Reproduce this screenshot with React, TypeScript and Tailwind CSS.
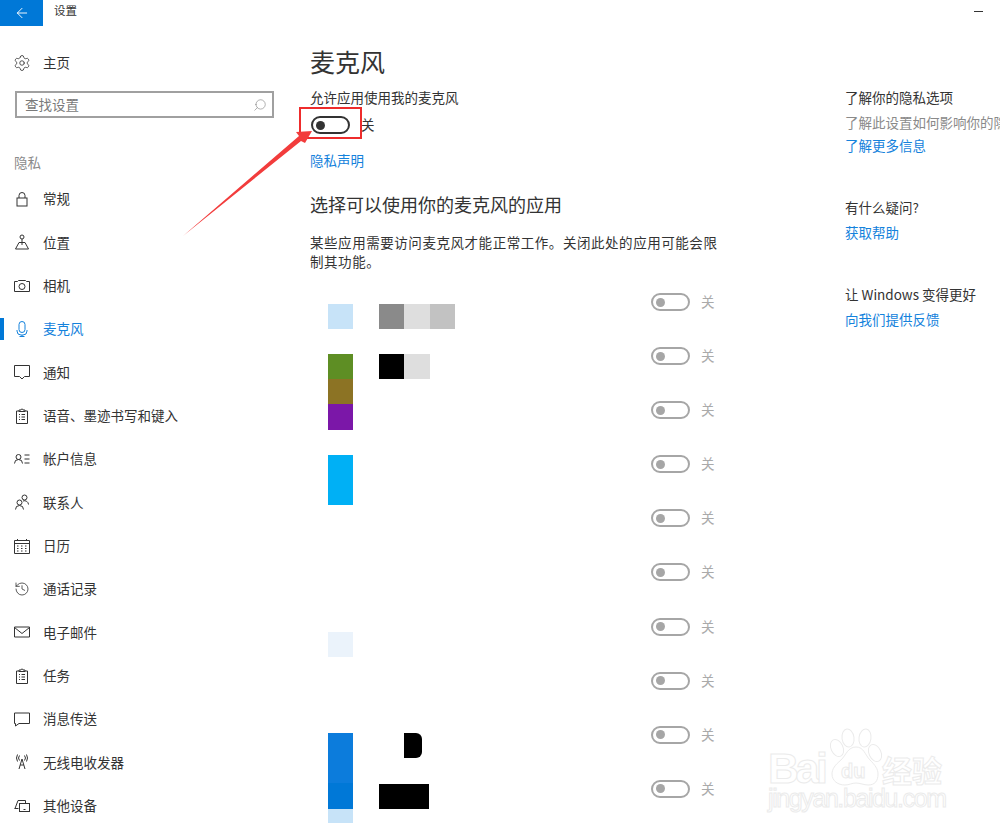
import { ArrowLeft, History, Search, Settings } from 'lucide-react';
import type { ReactNode } from 'react';

// all nav icons share one 16px box with a hairline stroke
function Ico({ children }: { children: ReactNode }) {
    return (
        <svg width="16" height="16" viewBox="0 0 16 16" fill="none" stroke="currentColor" strokeWidth="1" className="shrink-0">
            {children}
        </svg>
    );
}

const clipboard = (
    <Ico>
        <path d="M5 3H2.500v12.500h11V3H11" />
        <path d="M5 3.500V2h2a1 1 0 0 1 2 0h2v1.500z" />
        <path d="M5 6.500h1M7.500 6.500H11M5 9h1M7.500 9H11M5 11.500h1M7.500 11.500H11" />
    </Ico>
);

const navItems: { label: string; icon: ReactNode; active?: boolean }[] = [
    {
        label: '常规',
        icon: (
            <Ico>
                <rect x="3" y="7" width="10" height="8" />
                <path d="M5 7V4.500a3 3 0 0 1 6 0V7" />
            </Ico>
        ),
    },
    {
        label: '位置',
        icon: (
            <Ico>
                <circle cx="8" cy="3" r="2" />
                <path d="M8 5v6M5 8.500H11M5 8.500L1.500 15h13L11 8.500" />
            </Ico>
        ),
    },
    {
        label: '相机',
        icon: (
            <Ico>
                <path d="M.5 3.500h3l1-1h7l1 1h3v10H.5z" />
                <circle cx="8" cy="8.500" r="3" />
            </Ico>
        ),
    },
    {
        label: '麦克风',
        active: true,
        icon: (
            <Ico>
                <rect x="5" y=".5" width="6" height="11" rx="3" />
                <path d="M3 9v1a4 4 0 0 0 4 4h2a4 4 0 0 0 4-4V9M8 14v2M5.500 15.500h5" />
            </Ico>
        ),
    },
    {
        label: '通知',
        icon: (
            <Ico>
                <path d="M.5 1.500h15v11h-5L8 15l-2.500-2.500h-5z" />
            </Ico>
        ),
    },
    { label: '语音、墨迹书写和键入', icon: clipboard },
    {
        label: '帐户信息',
        icon: (
            <Ico>
                <circle cx="4.500" cy="6" r="2.500" />
                <path d="M.5 12.500a4 4 0 0 1 8 0M10.500 4h5M10.500 8h5M10.500 12h5" />
            </Ico>
        ),
    },
    {
        label: '联系人',
        icon: (
            <Ico>
                <circle cx="5.500" cy="8.500" r="2.500" />
                <path d="M1.500 15.500a4 4 0 0 1 8 0" />
                <circle cx="10.500" cy="3.500" r="2.500" />
                <path d="M9 7a4 4 0 0 1 5.500 3.500" />
            </Ico>
        ),
    },
    {
        label: '日历',
        icon: (
            <Ico>
                <path d="M.5 2.500h15v13H.5zM.5 5.500h15M3.500 1v2M12.500 1v2" />
                <path d="M3 8h1.500M7 8h1.500M11 8h1.500M3 10.500h1.500M7 10.500h1.500M11 10.500h1.500M3 13h1.500M7 13h1.500M11 13h1.500" />
            </Ico>
        ),
    },
    { label: '通话记录', icon: <History size={16} strokeWidth={1.2} className="shrink-0" /> },
    {
        label: '电子邮件',
        icon: (
            <Ico>
                <path d="M.5 3h15v10H.5zM.5 3.500L8 9.500l7.500-6" />
            </Ico>
        ),
    },
    { label: '任务', icon: clipboard },
    {
        label: '消息传送',
        icon: (
            <Ico>
                <path d="M.5 2h15v10.500H5L1.500 15v-2.500h-1z" />
            </Ico>
        ),
    },
    {
        label: '无线电收发器',
        icon: (
            <Ico>
                <path d="M8 5L5 15M8 5l3 10M6.200 11h3.600" />
                <path d="M5.500 1.500a4 4 0 0 0 0 5M10.500 1.500a4 4 0 0 1 0 5M3.500.5a7 7 0 0 0 0 7M12.500.5a7 7 0 0 1 0 7" />
            </Ico>
        ),
    },
    {
        label: '其他设备',
        icon: (
            <Ico>
                <path d="M1 10.500L4 2.500h7.500v3M4.500 10.500H.5" />
                <rect x="5.500" y="5.500" width="10" height="8" />
                <path d="M9.500 11.500h2" />
            </Ico>
        ),
    },
];

function Toggle({ dark }: { dark?: boolean }) {
    return (
        <div
            className={`flex h-[18px] w-[39px] items-center rounded-full border-2 pl-[2.5px] ${
                dark ? 'border-[#333333]' : 'border-[#a6a6a6]'
            }`}
        >
            <div className={`h-[9px] w-[9px] rounded-full ${dark ? 'bg-[#333333]' : 'bg-[#a6a6a6]'}`}></div>
        </div>
    );
}

function Watermark() {
    const outline = { fill: '#ffffff', stroke: '#ebebeb', strokeWidth: 1 };
    return (
        <svg width="200" height="110" viewBox="0 0 200 110" className="absolute left-[760px] top-[724px]">
            <g fontFamily="Liberation Sans, sans-serif" {...outline}>
                <text x="8" y="59" fontSize="43" fontWeight="700" textLength="60">Bai</text>
                <text x="122" y="58" fontSize="30" fontFamily="Noto Sans CJK SC, sans-serif" fontWeight="700">经验</text>
                <text x="8" y="83" fontSize="25" textLength="179">jingyan.baidu.com</text>
            </g>
            <ellipse cx="77" cy="24" rx="6" ry="9" transform="rotate(-25 77 24)" {...outline} />
            <ellipse cx="88" cy="14" rx="6" ry="9" transform="rotate(-8 88 14)" {...outline} />
            <ellipse cx="105" cy="14" rx="6" ry="9" transform="rotate(8 105 14)" {...outline} />
            <ellipse cx="115" cy="29" rx="6" ry="9" transform="rotate(-25 115 29)" {...outline} />
            <path d="M96 23c-8 0-10 8-15 13-6 5-9 9-9 14 0 7 6 11 13 11 4 0 7-2 11-2s8 2 12 2c7 0 10-4 10-11 0-5-3-9-8-14-5-5-6-13-14-13z" {...outline} />
            <text x="81" y="54" fontSize="20" fontWeight="700" fontFamily="Liberation Sans, sans-serif" {...outline}>du</text>
        </svg>
    );
}

export default function App() {
    return (
        <div className="relative flex h-[834px] w-[1000px] flex-col overflow-hidden bg-white font-['Noto_Sans_CJK_SC',sans-serif] text-[13.5px] text-[#333333]">
            {/* title bar */}
            <div className="flex h-[26px] shrink-0 items-center">
                <div className="flex h-[26px] w-[43px] items-center justify-center bg-[#0078d7] text-white">
                    <ArrowLeft size={16} strokeWidth={1.4} />
                </div>
                <span className="-mt-[4px] ml-[11px] text-[11.5px]">设置</span>
                <div className="-mt-[3px] ml-auto mr-[17px] h-px w-[9px] bg-[#333333]"></div>
            </div>

            <div className="flex min-h-0 flex-1">
                {/* sidebar */}
                <div className="w-[310px] shrink-0">
                    <div className="mt-[15px] flex h-[43.33px] items-center pl-[13px]">
                        <Settings size={18} strokeWidth={1.1} className="shrink-0" />
                        <span className="-mt-[2px] ml-[12px]">主页</span>
                    </div>
                    <div className="ml-[15px] mt-[7px] flex h-[27px] w-[259px] items-center justify-between border-2 border-[#a0a0a0] pl-[8px] pr-[5px] text-[#7a7a7a]">
                        <span className="-mt-[2px]">查找设置</span>
                        <Search size={14} strokeWidth={1} className="-scale-x-100" />
                    </div>
                    <div className="ml-[14px] mt-[34px] h-[20px] leading-[20px] text-[#8a8a8a]">隐私</div>
                    <div className="mt-[5px] flex flex-col">
                        {navItems.map((item) => (
                            <div
                                key={item.label}
                                className={`flex h-[43.33px] shrink-0 items-center ${item.active ? 'text-[#1482dc]' : ''}`}
                            >
                                <div className={`h-[22px] w-[4px] shrink-0 ${item.active ? 'bg-[#0078d7]' : ''}`}></div>
                                <div className="ml-[10px] flex items-center gap-[13px]">
                                    {item.icon}
                                    <span className="-mt-px whitespace-nowrap">{item.label}</span>
                                </div>
                            </div>
                        ))}
                    </div>
                </div>

                {/* main column */}
                <div className="w-[535px] shrink-0">
                    <h1 className="mt-[18px] h-[34px] text-[25px] leading-[34px]">麦克风</h1>
                    <div className="mt-[9px] h-[20px] leading-[20px]">允许应用使用我的麦克风</div>
                    <div className="mt-[9px] flex h-[18px] items-center pl-px">
                        <Toggle dark />
                        <span className="-mt-[2px] ml-[11px]">关</span>
                    </div>
                    <div className="mt-[16px] h-[20px] leading-[20px] text-[#1482dc]">隐私声明</div>
                    <h2 className="mt-[20px] h-[28px] text-[18px] leading-[28px]">选择可以使用你的麦克风的应用</h2>
                    <p className="mt-[15px] w-[415px] leading-[19px] tracking-[0.55px]">
                        某些应用需要访问麦克风才能正常工作。关闭此处的应用可能会限制其功能。
                    </p>

                    <div className="mt-[22px] flex">
                        {/* tile stack */}
                        <div className="ml-[18px] flex w-[25px] shrink-0 flex-col">
                            <div className="mt-[11px] h-[25px] bg-[#c7e3f8]"></div>
                            <div className="mt-[25px] h-[25px] bg-[#5e8e24]"></div>
                            <div className="h-[25px] bg-[#8c7324]"></div>
                            <div className="h-[26px] bg-[#7b17a8]"></div>
                            <div className="mt-[25px] h-[50px] bg-[#00b0f5]"></div>
                            <div className="mt-[127px] h-[25px] bg-[#ebf3fb]"></div>
                            <div className="mt-[76px] h-[50px] bg-[#0c7cdc]"></div>
                            <div className="h-[26px] bg-[#0078d7]"></div>
                            <div className="h-[14px] bg-[#c7e3f8]"></div>
                        </div>
                        <div className="ml-[26px] flex w-[76px] shrink-0 flex-col">
                            <div className="mt-[11px] flex h-[25px]">
                                <div className="w-[25px] bg-[#8a8a8a]"></div>
                                <div className="w-[26px] bg-[#dedede]"></div>
                                <div className="w-[25px] bg-[#c2c2c2]"></div>
                            </div>
                            <div className="mt-[25px] flex h-[25px]">
                                <div className="w-[25px] bg-black"></div>
                                <div className="w-[26px] bg-[#dedede]"></div>
                            </div>
                            <div className="ml-[25px] mt-[354px] h-[25px] w-[18px] rounded-r-[6px] bg-black"></div>
                            <div className="mt-[26px] h-[25px] w-[50px] bg-black"></div>
                        </div>
                        {/* toggles */}
                        <div className="ml-[196px] flex flex-col">
                            {Array.from({ length: 10 }).map((_, i) => (
                                <div key={i} className="flex h-[54.1px] shrink-0 items-start">
                                    <Toggle />
                                    <span className="ml-[11px] h-[16px] leading-[16px] text-[#aaaaaa]">关</span>
                                </div>
                            ))}
                        </div>
                    </div>
                </div>

                {/* right column */}
                <div className="whitespace-nowrap">
                    <div className="mt-[61px] h-[20px] leading-[20px]">了解你的隐私选项</div>
                    <div className="mt-[5px] h-[20px] leading-[20px] text-[#8a8a8a]">了解此设置如何影响你的隐私</div>
                    <div className="mt-[3px] h-[20px] leading-[20px] text-[#1482dc]">了解更多信息</div>
                    <div className="mt-[42px] h-[20px] leading-[20px]">有什么疑问?</div>
                    <div className="mt-[5px] h-[20px] leading-[20px] text-[#1482dc]">获取帮助</div>
                    <div className="mt-[42px] h-[20px] leading-[20px]">让 Windows 变得更好</div>
                    <div className="mt-[5px] h-[20px] leading-[20px] text-[#1482dc]">向我们提供反馈</div>
                </div>
            </div>

            {/* annotation over the main toggle */}
            <div className="absolute left-[299px] top-[107px] h-[32px] w-[63px] border-[2.5px] border-[#ee2c2c]"></div>
            <svg width="1000" height="300" viewBox="0 0 1000 300" className="absolute left-0 top-0">
                <path d="M183 236L299 136L296 132L312 131L305 143L301 141Z" fill="#f23c3c" />
            </svg>
            <Watermark />
        </div>
    );
}
